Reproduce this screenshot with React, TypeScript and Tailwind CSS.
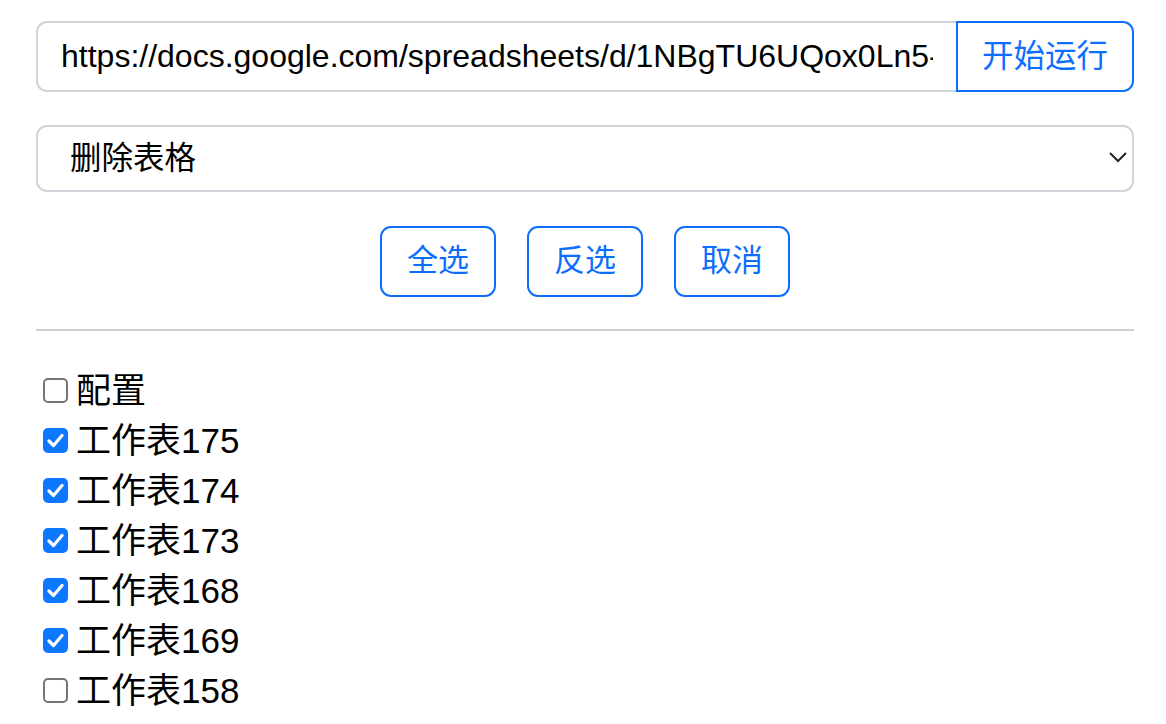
import React, { useState } from 'react';

const font = { fontFamily: '"Liberation Sans", "Noto Sans CJK SC", sans-serif' };

const initialSheets = [
  { name: '配置', checked: false },
  { name: '工作表175', checked: true },
  { name: '工作表174', checked: true },
  { name: '工作表173', checked: true },
  { name: '工作表168', checked: true },
  { name: '工作表169', checked: true },
  { name: '工作表158', checked: false },
];

const App: React.FC = () => {
  const [url, setUrl] = useState('https://docs.google.com/spreadsheets/d/1NBgTU6UQox0Ln5-Wq8xYkTz3rPqLmA/edit');
  const [action, setAction] = useState('delete');
  const [sheets, setSheets] = useState(initialSheets);

  const toggle = (index: number) => {
    setSheets(sheets.map((s, i) => (i === index ? { ...s, checked: !s.checked } : s)));
  };

  const selectAll = () => setSheets(sheets.map(s => ({ ...s, checked: true })));
  const invert = () => setSheets(sheets.map(s => ({ ...s, checked: !s.checked })));
  const clearAll = () => setSheets(sheets.map(s => ({ ...s, checked: false })));

  return (
    <div className="min-h-screen bg-white text-black" style={font}>
      <div className="pl-[36px] pr-[32px] pt-[21px]">
        <div className="flex h-[71px]">
          <input
            value={url}
            onChange={e => setUrl(e.target.value)}
            className="flex-1 min-w-0 h-full rounded-l-[11px] border-2 border-r-0 border-[#ced4da] pl-[23px] pr-[23px] text-[32px] text-black outline-none"
          />
          <button className="w-[178px] h-full rounded-r-[11px] border-2 border-[#0d6efd] text-[31.5px] text-[#0d6efd] bg-white">
            开始运行
          </button>
        </div>

        <div className="relative mt-[33px] h-[67px]">
          <select
            value={action}
            onChange={e => setAction(e.target.value)}
            className="appearance-none w-full h-full rounded-[11px] border-2 border-[#ced4da] bg-white pl-[32px] text-[31.5px] text-black outline-none"
          >
            <option value="delete">删除表格</option>
            <option value="copy">复制表格</option>
          </select>
          <svg
            className="absolute right-[6px] top-[25px] pointer-events-none"
            width="20"
            height="14"
            viewBox="0 0 20 14"
            fill="none"
          >
            <path d="M2 3 L10 11 L18 3" stroke="#222" strokeWidth="2" />
          </svg>
        </div>

        <div className="flex justify-center gap-[31px] mt-[34px]">
          <button onClick={selectAll} className="w-[116px] h-[71px] rounded-[11px] border-2 border-[#0d6efd] text-[31px] text-[#0d6efd] bg-white">
            全选
          </button>
          <button onClick={invert} className="w-[116px] h-[71px] rounded-[11px] border-2 border-[#0d6efd] text-[31px] text-[#0d6efd] bg-white">
            反选
          </button>
          <button onClick={clearAll} className="w-[116px] h-[71px] rounded-[11px] border-2 border-[#0d6efd] text-[31px] text-[#0d6efd] bg-white">
            取消
          </button>
        </div>

        <hr className="mt-[32px] border-t-2 border-[#cfcfcf]" />

        <div className="mt-[34px] pl-[7px]">
          {sheets.map((sheet, index) => (
            <label key={sheet.name} className="flex items-center h-[50px] cursor-pointer" onClick={() => toggle(index)}>
              {sheet.checked ? (
                <span className="w-[25px] h-[25px] rounded-[5px] bg-[#0b78ff] flex items-center justify-center">
                  <svg width="17" height="15" viewBox="0 0 17 15" fill="none">
                    <path d="M2 8 L6.5 12.5 L15 2.5" stroke="white" strokeWidth="3.2" strokeLinecap="round" strokeLinejoin="round" />
                  </svg>
                </span>
              ) : (
                <span className="w-[25px] h-[25px] rounded-[5px] border-2 border-[#767676] bg-white" />
              )}
              <span className="ml-[8px] text-[35px] leading-none">{sheet.name}</span>
            </label>
          ))}
        </div>
      </div>
    </div>
  );
};

export default App;
